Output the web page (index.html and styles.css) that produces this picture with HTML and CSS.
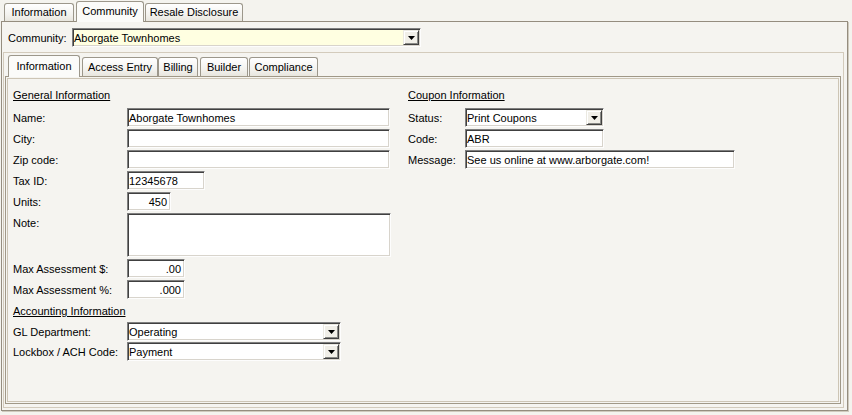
FILE: index.html
```html
<!DOCTYPE html>
<html>
<head>
<meta charset="utf-8">
<link rel="stylesheet" href="styles.css">
</head>
<body>
<div class="tabs top-tabs">
  <div class="tab t-info">Information</div>
  <div class="tab active t-comm">Community</div>
  <div class="tab t-resale">Resale Disclosure</div>
</div>
<div class="outer">
  <div class="comm-row">
    <span class="comm-label">Community:</span>
    <div class="field combo yellow w-comm"><span class="val">Aborgate Townhomes</span><span class="drop"><svg width="7" height="4" viewBox="0 0 7 4"><path d="M0 0h7L3.5 4z" fill="#000"/></svg></span></div>
  </div>
  <div class="frame">
    <div class="tabs inner-tabs">
      <div class="tab active i-info">Information</div>
      <div class="tab i-access">Access Entry</div>
      <div class="tab i-billing">Billing</div>
      <div class="tab i-builder">Builder</div>
      <div class="tab i-compl">Compliance</div>
    </div>
    <div class="panel">
      <div class="inner">
        <div class="col col-left">
          <div class="hdr">General Information</div>
          <div class="grid">
            <span class="lbl">Name:</span><div class="field w-263">Aborgate Townhomes</div>
            <span class="lbl">City:</span><div class="field w-263"></div>
            <span class="lbl">Zip code:</span><div class="field w-263"></div>
            <span class="lbl">Tax ID:</span><div class="field w-78">12345678</div>
            <span class="lbl">Units:</span><div class="field w-44 num">450</div>
            <span class="lbl">Note:</span><div class="field w-264 note"></div>
            <span class="lbl">Max Assessment $:</span><div class="field w-58 num">.00</div>
            <span class="lbl">Max Assessment %:</span><div class="field w-58 num">.000</div>
          </div>
          <div class="hdr hdr-acct">Accounting Information</div>
          <div class="grid grid-tight">
            <span class="lbl">GL Department:</span><div class="field combo w-214"><span class="val">Operating</span><span class="drop"><svg width="7" height="4" viewBox="0 0 7 4"><path d="M0 0h7L3.5 4z" fill="#000"/></svg></span></div>
            <span class="lbl">Lockbox / ACH Code:</span><div class="field combo w-214"><span class="val">Payment</span><span class="drop"><svg width="7" height="4" viewBox="0 0 7 4"><path d="M0 0h7L3.5 4z" fill="#000"/></svg></span></div>
          </div>
        </div>
        <div class="col col-right">
          <div class="hdr">Coupon Information</div>
          <div class="grid grid-coupon">
            <span class="lbl">Status:</span><div class="field combo w-139"><span class="val">Print Coupons</span><span class="drop"><svg width="7" height="4" viewBox="0 0 7 4"><path d="M0 0h7L3.5 4z" fill="#000"/></svg></span></div>
            <span class="lbl">Code:</span><div class="field w-139">ABR</div>
            <span class="lbl">Message:</span><div class="field w-270">See us online at www.arborgate.com!</div>
          </div>
        </div>
      </div>
    </div>
  </div>
</div>
</body>
</html>
```
FILE: styles.css
```css
* { box-sizing: border-box; }
html, body {
  margin: 0;
  padding: 0;
}
body {
  width: 852px;
  height: 415px;
  overflow: hidden;
  background: #f4f3ee;
  font-family: "Liberation Sans", Arial, sans-serif;
  font-size: 11px;
  color: #000;
}

/* tabs */
.tabs {
  display: flex;
  align-items: flex-end;
}
.tab {
  position: relative;
  height: 19px;
  border: 1px solid #9c978b;
  border-bottom: none;
  border-radius: 3px 3px 0 0;
  background: linear-gradient(#ffffff, #f3f2ee 60%, #e6e4dc);
  text-align: center;
  line-height: 17px;
  white-space: nowrap;
}
.tab.active {
  z-index: 2;
  height: 21px;
  background: #fbfbf9;
  line-height: 19px;
}
.top-tabs {
  height: 22px;
  padding-left: 4px;
}
.t-info { width: 70px; margin-right: 2px; }
.t-comm { width: 68px; margin-right: 1px; }
.t-resale { width: 98px; }

.inner-tabs {
  height: 24px;
  padding-left: 3px;
}
.inner-tabs .tab { height: 20px; line-height: 18px; }
.inner-tabs .tab.active { height: 22px; line-height: 20px; }
.i-info { width: 72px; margin-right: 2px; }
.i-access { width: 76px; }
.i-billing { width: 40px; margin-right: 2px; }
.i-builder { width: 48px; margin-right: 1px; }
.i-compl { width: 69px; }

/* outer panel */
.outer {
  position: relative;
  margin: -1px 0 0 1px;
  width: 847px;
  height: 390px;
  border: 1px solid #958d7f;
  box-shadow: 1px 1px 0 #cfcabd;
  background: #f5f4f0;
}
.comm-row {
  display: flex;
  align-items: flex-start;
  height: 30px;
  padding: 6px 0 0 6px;
}
.comm-label {
  width: 64px;
  height: 19px;
  line-height: 18px;
  padding-top: 1px;
}
.w-comm { width: 349px; }

.frame {
  margin-left: 1px;
  width: 841px;
  height: 356px;
  border: 1px solid #d3cbbc;
  padding: 0 2px 3px 1px;
}
.panel {
  position: relative;
  margin-top: -1px;
  width: 836px;
  height: 328px;
  border: 1px solid #a09887;
  background: #f5f4f0;
}
.inner {
  margin: 1px;
  height: 324px;
  border: 1px solid #cdc5b5;
  padding: 10px 5px;
  display: flex;
}
.col-left { width: 395px; }
.col-right { flex: 1; }

.hdr {
  height: 13px;
  line-height: 13px;
  text-decoration: underline;
  margin-bottom: 6px;
}
.hdr-acct {
  margin-top: 6px;
  margin-bottom: 4px;
}

.grid {
  display: grid;
  grid-template-columns: 114px auto;
  row-gap: 2px;
  justify-items: start;
}
.grid-tight { row-gap: 1px; }
.grid-coupon { grid-template-columns: 57px auto; }
.lbl {
  height: 19px;
  line-height: 18px;
  padding-top: 1px;
  align-self: start;
}

/* fields */
.field {
  height: 19px;
  background: #fff;
  border-top: 1px solid #7f7f7f;
  border-left: 1px solid #7f7f7f;
  border-right: 1px solid #fdfdfd;
  border-bottom: 1px solid #fdfdfd;
  box-shadow: inset 1px 1px 0 #404040, inset -1px -1px 0 #d8d4cc;
  padding: 0 1px;
  line-height: 18px;
  white-space: nowrap;
  overflow: hidden;
}
.field.num { text-align: right; padding-right: 3px; }
.field.note { height: 44px; }
.field.yellow { background: #ffffe1; }
.combo {
  display: flex;
  padding-right: 0;
}
.combo .val { flex: 1; }
.drop {
  width: 16px;
  margin: 1px;
  display: flex;
  align-items: center;
  justify-content: center;
  background: #f1efe8;
  border: 1px solid;
  border-color: #ebe9e1 #404040 #404040 #ebe9e1;
  box-shadow: inset 1px 1px 0 #fff, inset -1px -1px 0 #8a8a86;
}
.drop svg { display: block; margin-top: 1px; }

.w-263 { width: 263px; }
.w-264 { width: 264px; }
.w-78 { width: 78px; }
.w-44 { width: 44px; }
.w-58 { width: 58px; }
.w-214 { width: 214px; }
.w-139 { width: 139px; }
.w-270 { width: 270px; }
```
